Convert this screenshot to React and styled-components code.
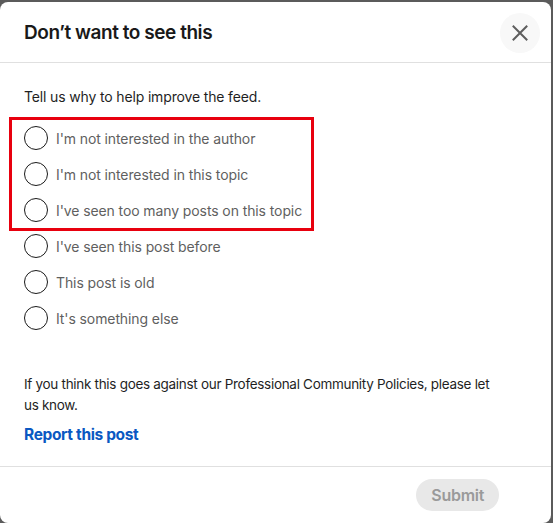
import React from "react";
import styled, { createGlobalStyle } from "styled-components";

const GlobalStyle = createGlobalStyle`
    html, body {
        margin: 0;
        padding: 0;
        background: #5b5b5b;
    }
    body {
        font-family: Inter, "Noto Sans", "Liberation Sans", sans-serif;
        -webkit-font-smoothing: antialiased;
    }
`;

const reasons = [
    "I'm not interested in the author",
    "I'm not interested in this topic",
    "I've seen too many posts on this topic",
    "I've seen this post before",
    "This post is old",
    "It's something else",
];

const Option = ({ label }) => (
    <OptionRow>
        <Radio type="radio" name="reason" />
        <OptionLabel>{label}</OptionLabel>
    </OptionRow>
);

const App = () => {
    return (
        <>
            <GlobalStyle />
            <Modal>
                <Header>
                    <Title>Don’t want to see this</Title>
                    <CloseBtn aria-label="Dismiss">
                        <svg width="24" height="24" viewBox="0 0 24 24">
                            <path
                                d="M5.5 5.5l13 13M18.5 5.5l-13 13"
                                stroke="#5e5e5e"
                                strokeWidth="2"
                                strokeLinecap="square"
                                fill="none"
                            />
                        </svg>
                    </CloseBtn>
                </Header>
                <Body>
                    <Intro>Tell us why to help improve the feed.</Intro>
                    <OptionList>
                        <Highlight>
                            {reasons.slice(0, 3).map((r) => (
                                <Option key={r} label={r} />
                            ))}
                        </Highlight>
                        {reasons.slice(3).map((r) => (
                            <Option key={r} label={r} />
                        ))}
                    </OptionList>
                    <Policy>
                        If you think this goes against our Professional Community Policies, please let
                        us know.
                    </Policy>
                    <ReportLink href="#">Report this post</ReportLink>
                </Body>
                <Footer>
                    <SubmitBtn disabled>Submit</SubmitBtn>
                </Footer>
            </Modal>
        </>
    );
};

export default App;

const Modal = styled.div`
    margin-top: 2px;
    width: 551px;
    height: 521px;
    background: #fff;
    border-radius: 8px;
    display: flex;
    flex-direction: column;
    overflow: hidden;
`;

const Header = styled.div`
    height: 60px;
    flex-shrink: 0;
    display: flex;
    align-items: center;
    justify-content: space-between;
    padding: 0 11px 0 24px;
    border-bottom: 1px solid #e0e0e0;
`;

const Title = styled.h2`
    margin: 0;
    font-size: 19px;
    font-weight: 600;
    color: #191919;
    letter-spacing: -0.45px;
`;

const CloseBtn = styled.button`
    width: 40px;
    height: 40px;
    margin-top: 2px;
    border-radius: 50%;
    border: none;
    background: #f8f8f8;
    display: flex;
    align-items: center;
    justify-content: center;
    padding: 0;
    cursor: pointer;
`;

const Body = styled.div`
    flex: 1;
    padding: 24px 51px 0 24px;
    display: flex;
    flex-direction: column;
`;

const Intro = styled.p`
    margin: 0;
    font-size: 14px;
    line-height: 20px;
    letter-spacing: -0.15px;
    color: #1f1f1f;
`;

const OptionList = styled.div`
    margin-top: 13px;
    display: flex;
    flex-direction: column;
`;

const Highlight = styled.div`
    margin-left: -12px;
    padding-left: 12px;
    width: 287px;
    outline: 3px solid #e8000e;
    display: flex;
    flex-direction: column;
`;

const OptionRow = styled.label`
    height: 36px;
    display: flex;
    align-items: center;
    gap: 8px;
    cursor: pointer;
    white-space: nowrap;
`;

const Radio = styled.input`
    appearance: none;
    margin: 0;
    width: 24px;
    height: 24px;
    border-radius: 50%;
    border: 1px solid #1a1a1a;
    background: #fff;
    flex-shrink: 0;
`;

const OptionLabel = styled.span`
    font-size: 14px;
    letter-spacing: -0.1px;
    color: #5f5f5f;
`;

const Policy = styled.p`
    margin: 38px 0 0;
    font-size: 13.5px;
    line-height: 21px;
    letter-spacing: -0.3px;
    color: #1f1f1f;
`;

const ReportLink = styled.a`
    margin-top: 8px;
    align-self: flex-start;
    font-size: 15.5px;
    line-height: 22px;
    font-weight: 700;
    letter-spacing: -0.35px;
    color: #0a58c2;
    text-decoration: none;
`;

const Footer = styled.div`
    height: 56px;
    flex-shrink: 0;
    border-top: 1px solid #e0e0e0;
    display: flex;
    align-items: center;
    justify-content: flex-end;
    padding: 0 52px 0 24px;
`;

const SubmitBtn = styled.button`
    height: 32px;
    padding: 0 15px;
    border-radius: 16px;
    border: none;
    background: #e8e8e8;
    color: #9a9a9a;
    font-family: inherit;
    font-size: 16px;
    font-weight: 600;
    letter-spacing: -0.3px;
`;
